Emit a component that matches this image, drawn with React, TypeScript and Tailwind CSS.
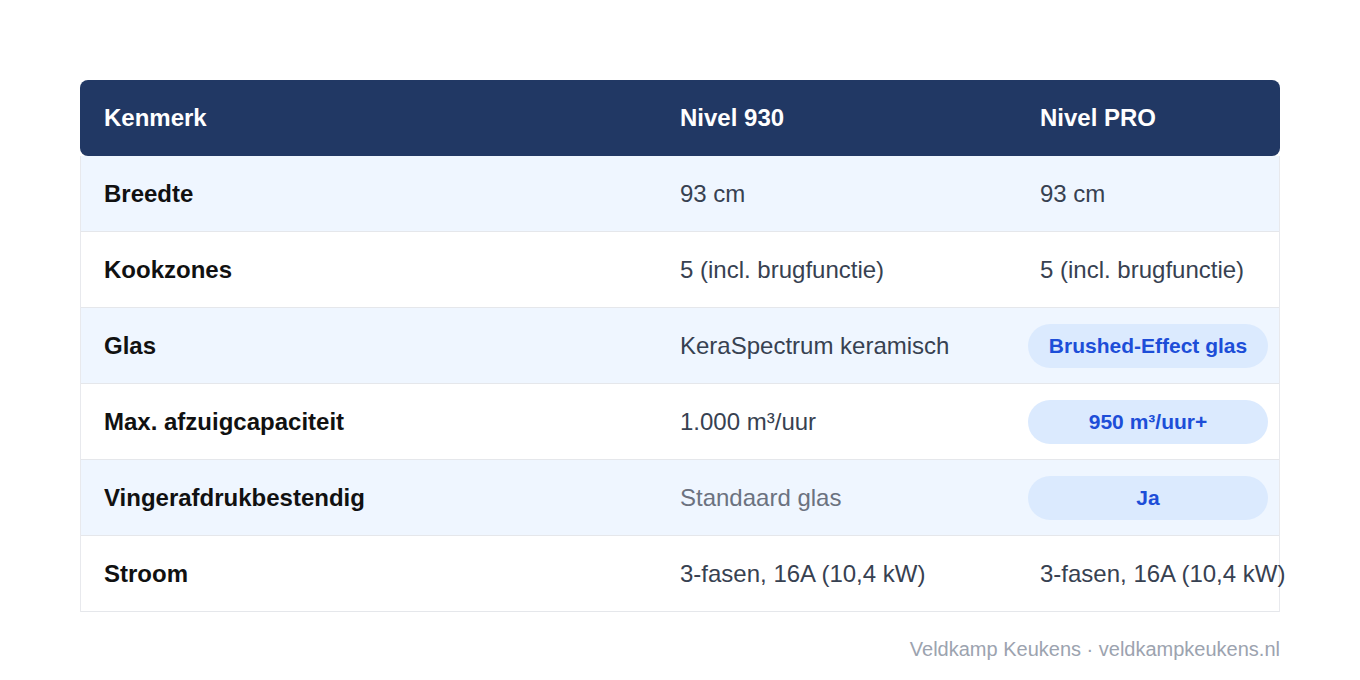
import React from "react";

type Cell = { text: string; pill?: boolean; muted?: boolean };
type Row = { label: string; a: Cell; b: Cell };

const rows: Row[] = [
  { label: "Breedte", a: { text: "93 cm" }, b: { text: "93 cm" } },
  { label: "Kookzones", a: { text: "5 (incl. brugfunctie)" }, b: { text: "5 (incl. brugfunctie)" } },
  { label: "Glas", a: { text: "KeraSpectrum keramisch" }, b: { text: "Brushed-Effect glas", pill: true } },
  { label: "Max. afzuigcapaciteit", a: { text: "1.000 m³/uur" }, b: { text: "950 m³/uur+", pill: true } },
  { label: "Vingerafdrukbestendig", a: { text: "Standaard glas", muted: true }, b: { text: "Ja", pill: true } },
  { label: "Stroom", a: { text: "3-fasen, 16A (10,4 kW)" }, b: { text: "3-fasen, 16A (10,4 kW)" } },
];

function ValueCell({ cell }: { cell: Cell }) {
  if (cell.pill) {
    return (
      <div className="flex items-center px-[11px]">
        <div className="flex h-[44px] w-full items-center justify-center rounded-full bg-[#dbeafe] text-[21px] font-bold text-[#1d4ed8]">
          {cell.text}
        </div>
      </div>
    );
  }
  return (
    <div
      className={
        "flex items-center whitespace-nowrap pl-[23px] text-[24px] " +
        (cell.muted ? "text-[#6b7280]" : "text-[#374151]")
      }
    >
      {cell.text}
    </div>
  );
}

export default function App() {
  return (
    <div
      className="min-h-[680px] w-full bg-white pt-[80px]"
      style={{ fontFamily: '"Liberation Sans", Arial, sans-serif' }}
    >
      <div className="mx-auto w-[1200px]">
        <div className="grid h-[76px] grid-cols-[576px_360px_264px] rounded-lg bg-[#213864] text-[24px] font-bold text-white">
          <div className="flex items-center pl-6">Kenmerk</div>
          <div className="flex items-center pl-6">Nivel 930</div>
          <div className="flex items-center pl-6">Nivel PRO</div>
        </div>
        <div className="border-x border-[#e8e9ed]">
          {rows.map((r, i) => (
            <div
              key={r.label}
              className={
                "grid h-[76px] grid-cols-[576px_360px_262px] border-b border-[#e5e7eb] " +
                (i % 2 === 0 ? "bg-[#eff6ff]" : "bg-white")
              }
            >
              <div className="flex items-center pl-[23px] text-[24px] font-bold text-[#111111]">{r.label}</div>
              <ValueCell cell={r.a} />
              <ValueCell cell={r.b} />
            </div>
          ))}
        </div>
        <div className="mt-[22px] text-right text-[20px] text-[#9ca3af]">
          Veldkamp Keukens · veldkampkeukens.nl
        </div>
      </div>
    </div>
  );
}
